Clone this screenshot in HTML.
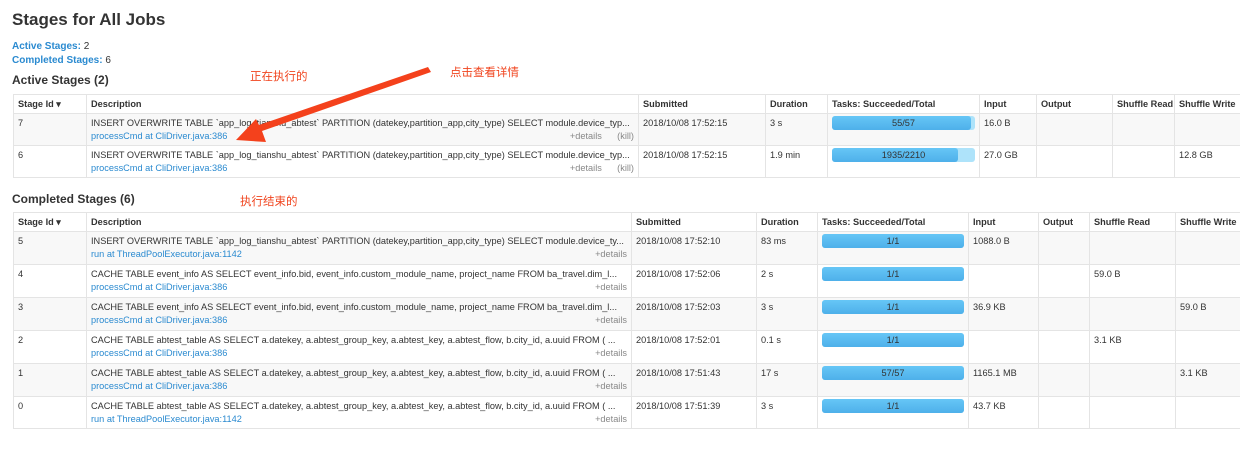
<!DOCTYPE html>
<html><head><meta charset="utf-8"><style>
*{margin:0;padding:0;box-sizing:border-box}
body{width:1240px;height:466px;overflow:hidden;background:#fff;font-family:"Liberation Sans","Noto Sans CJK SC",sans-serif;color:#333;font-size:10px;position:relative}
.a{position:absolute;white-space:nowrap}
h1{position:absolute;left:12px;top:10px;font-size:17px;font-weight:bold;color:#333}
.lnk{color:#2a8ad0}
.h4{font-size:12px;font-weight:bold;color:#333}
.red{color:#f0441e;font-size:11.5px}
table{position:absolute;left:13px;border-collapse:collapse;table-layout:fixed;border:1px solid #e2e2e2}
td,th{border:1px solid #e4e4e4;vertical-align:top;padding:4px 4px 0 4px;text-align:left;font-size:9.2px;overflow:hidden;white-space:nowrap}
th{font-weight:bold;height:19px;padding-top:4px}
tr.g td{background:#f8f8f8}
.sub{display:flex;justify-content:space-between;margin-top:3px}
.det{color:#888}
.bar{height:14px;margin-top:-2px;border-radius:3px;background:#aee3fa;position:relative;text-align:center;color:#333;line-height:14px}
.bar i{position:absolute;left:0;top:0;bottom:0;background:linear-gradient(#66c6f6,#4eb0ea);border-radius:3px}
.bar span{position:relative}
</style></head><body>
<h1>Stages for All Jobs</h1>
<div class="a" style="left:12px;top:41px"><b class="lnk">Active Stages:</b> 2</div>
<div class="a" style="left:12px;top:55px"><b class="lnk">Completed Stages:</b> 6</div>
<div class="a h4" style="left:12px;top:73px">Active Stages (2)</div>
<div class="a red" style="left:250px;top:68px">正在执行的</div>
<div class="a red" style="left:450px;top:64px">点击查看详情</div>
<div class="a h4" style="left:12px;top:192px">Completed Stages (6)</div>
<div class="a red" style="left:240px;top:193px">执行结束的</div>

<table style="top:94px;width:1240px">
<colgroup><col style="width:73px"><col style="width:552px"><col style="width:127px"><col style="width:62px"><col style="width:152px"><col style="width:57px"><col style="width:76px"><col style="width:62px"><col style="width:79px"></colgroup>
<tr><th>Stage Id &#9662;</th><th>Description</th><th>Submitted</th><th>Duration</th><th>Tasks: Succeeded/Total</th><th>Input</th><th>Output</th><th>Shuffle Read</th><th>Shuffle Write</th></tr>
<tr class="g" style="height:32px"><td>7</td><td>INSERT OVERWRITE TABLE `app_log_tianshu_abtest` PARTITION (datekey,partition_app,city_type) SELECT module.device_typ...<div class="sub"><span class="lnk">processCmd at CliDriver.java:386</span><span class="det">+details &nbsp; &nbsp; &nbsp;(kill)</span></div></td><td>2018/10/08 17:52:15</td><td>3 s</td><td><div class="bar"><i style="width:97%"></i><span>55/57</span></div></td><td>16.0 B</td><td></td><td></td><td></td></tr>
<tr style="height:32px"><td>6</td><td>INSERT OVERWRITE TABLE `app_log_tianshu_abtest` PARTITION (datekey,partition_app,city_type) SELECT module.device_typ...<div class="sub"><span class="lnk">processCmd at CliDriver.java:386</span><span class="det">+details &nbsp; &nbsp; &nbsp;(kill)</span></div></td><td>2018/10/08 17:52:15</td><td>1.9 min</td><td><div class="bar"><i style="width:88%"></i><span>1935/2210</span></div></td><td>27.0 GB</td><td></td><td></td><td>12.8 GB</td></tr>
</table>

<table style="top:212px;width:1240px">
<colgroup><col style="width:73px"><col style="width:545px"><col style="width:125px"><col style="width:61px"><col style="width:151px"><col style="width:70px"><col style="width:51px"><col style="width:86px"><col style="width:78px"></colgroup>
<tr><th>Stage Id &#9662;</th><th>Description</th><th>Submitted</th><th>Duration</th><th>Tasks: Succeeded/Total</th><th>Input</th><th>Output</th><th>Shuffle Read</th><th>Shuffle Write</th></tr>
<tr class="g" style="height:33px"><td>5</td><td>INSERT OVERWRITE TABLE `app_log_tianshu_abtest` PARTITION (datekey,partition_app,city_type) SELECT module.device_ty...<div class="sub"><span class="lnk">run at ThreadPoolExecutor.java:1142</span><span class="det">+details</span></div></td><td>2018/10/08 17:52:10</td><td>83 ms</td><td><div class="bar"><i style="width:100%"></i><span>1/1</span></div></td><td>1088.0 B</td><td></td><td></td><td></td></tr>
<tr style="height:33px"><td>4</td><td>CACHE TABLE event_info AS SELECT event_info.bid, event_info.custom_module_name, project_name FROM ba_travel.dim_l...<div class="sub"><span class="lnk">processCmd at CliDriver.java:386</span><span class="det">+details</span></div></td><td>2018/10/08 17:52:06</td><td>2 s</td><td><div class="bar"><i style="width:100%"></i><span>1/1</span></div></td><td></td><td></td><td>59.0 B</td><td></td></tr>
<tr class="g" style="height:33px"><td>3</td><td>CACHE TABLE event_info AS SELECT event_info.bid, event_info.custom_module_name, project_name FROM ba_travel.dim_l...<div class="sub"><span class="lnk">processCmd at CliDriver.java:386</span><span class="det">+details</span></div></td><td>2018/10/08 17:52:03</td><td>3 s</td><td><div class="bar"><i style="width:100%"></i><span>1/1</span></div></td><td>36.9 KB</td><td></td><td></td><td>59.0 B</td></tr>
<tr style="height:33px"><td>2</td><td>CACHE TABLE abtest_table AS SELECT a.datekey, a.abtest_group_key, a.abtest_key, a.abtest_flow, b.city_id, a.uuid FROM ( ...<div class="sub"><span class="lnk">processCmd at CliDriver.java:386</span><span class="det">+details</span></div></td><td>2018/10/08 17:52:01</td><td>0.1 s</td><td><div class="bar"><i style="width:100%"></i><span>1/1</span></div></td><td></td><td></td><td>3.1 KB</td><td></td></tr>
<tr class="g" style="height:33px"><td>1</td><td>CACHE TABLE abtest_table AS SELECT a.datekey, a.abtest_group_key, a.abtest_key, a.abtest_flow, b.city_id, a.uuid FROM ( ...<div class="sub"><span class="lnk">processCmd at CliDriver.java:386</span><span class="det">+details</span></div></td><td>2018/10/08 17:51:43</td><td>17 s</td><td><div class="bar"><i style="width:100%"></i><span>57/57</span></div></td><td>1165.1 MB</td><td></td><td></td><td>3.1 KB</td></tr>
<tr style="height:32px"><td>0</td><td>CACHE TABLE abtest_table AS SELECT a.datekey, a.abtest_group_key, a.abtest_key, a.abtest_flow, b.city_id, a.uuid FROM ( ...<div class="sub"><span class="lnk">run at ThreadPoolExecutor.java:1142</span><span class="det">+details</span></div></td><td>2018/10/08 17:51:39</td><td>3 s</td><td><div class="bar"><i style="width:100%"></i><span>1/1</span></div></td><td>43.7 KB</td><td></td><td></td><td></td></tr>
</table>

<svg class="a" style="left:0;top:0" width="1240" height="466">
<polygon points="428,67 431,72 262,131 266,142 236,140 256,119 259,125" fill="#f4411c"/>
</svg>
</body></html>
